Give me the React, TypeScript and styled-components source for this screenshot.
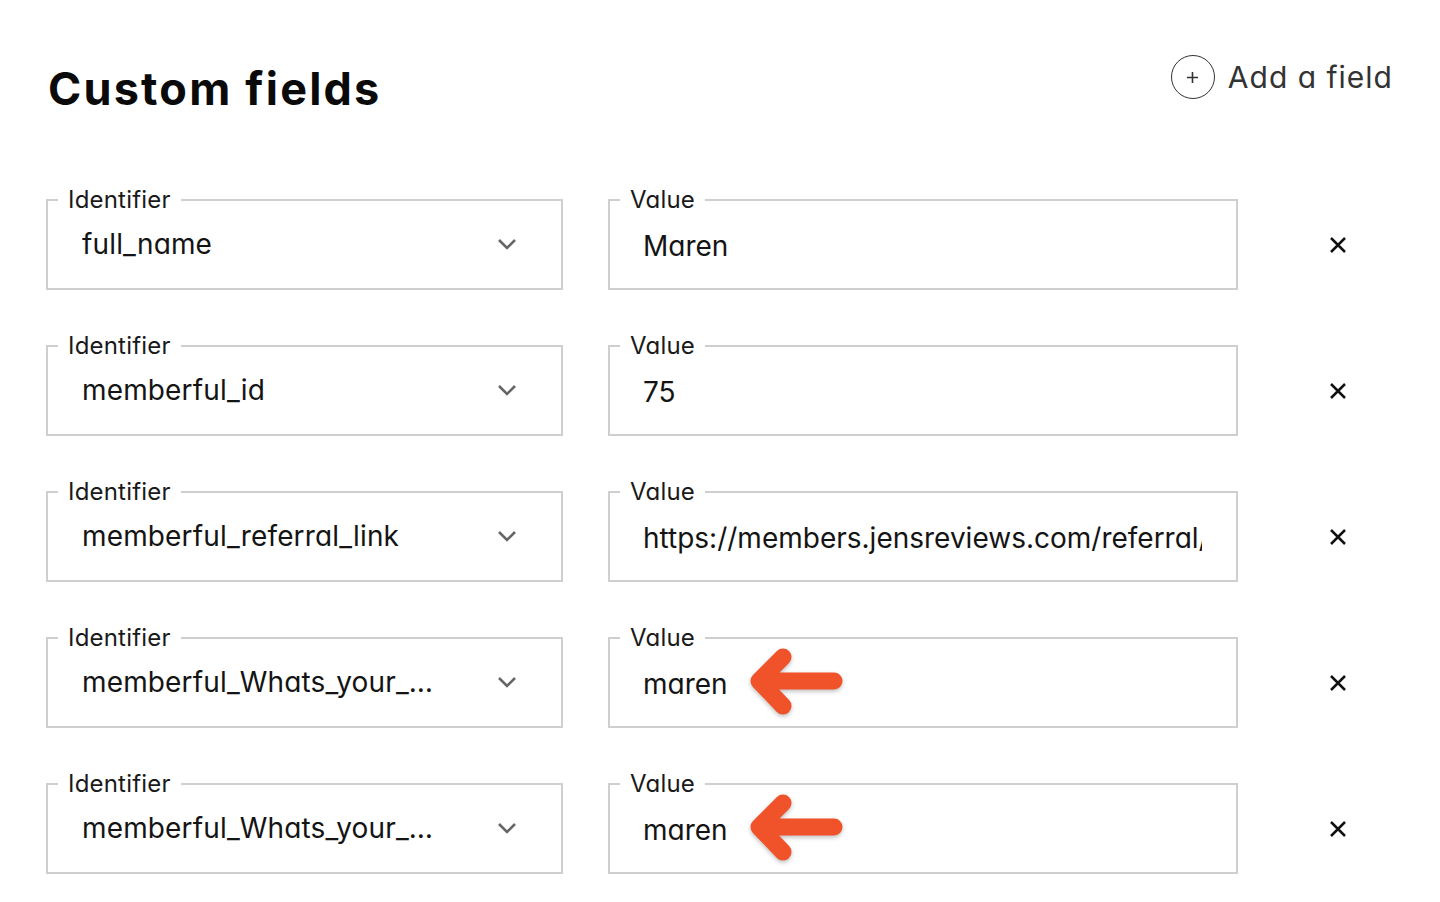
import React from "react";
import styled, { createGlobalStyle } from "styled-components";

const GlobalStyle = createGlobalStyle`
  html, body { margin: 0; padding: 0; background: #ffffff; }
  body {
    font-family: Inter, "Noto Sans", sans-serif;
    font-feature-settings: "cv11" 1;
    color: #111111;
  }
`;

const Page = styled.div`
  width: 1440px;
  height: 902px;
  box-sizing: border-box;
  padding: 0 0 0 46px;
  overflow: hidden;
`;

const Header = styled.div`
  display: flex;
  justify-content: space-between;
  align-items: flex-start;
  padding: 61px 47px 0 2px;
`;

const Title = styled.h1`
  margin: 0;
  font-size: 45px;
  line-height: 55px;
  font-weight: 700;
  letter-spacing: 2.2px;
  color: #0a0a0a;
`;

const AddButton = styled.button`
  display: flex;
  align-items: center;
  gap: 13px;
  margin-top: -6px;
  border: none;
  background: none;
  padding: 0;
  font-family: inherit;
  font-feature-settings: "cv11" 1;
  font-size: 30px;
  letter-spacing: 1px;
  color: #333333;
  cursor: pointer;
`;

const PlusCircle = styled.span`
  display: flex;
  align-items: center;
  justify-content: center;
  width: 44px;
  height: 44px;
  box-sizing: border-box;
  border: 1.6px solid #333333;
  border-radius: 50%;
`;

const Rows = styled.div`
  display: grid;
  grid-template-columns: 517px 630px 110px;
  column-gap: 45px;
  row-gap: 44px;
  margin-top: 72px;
`;

const Field = styled.fieldset`
  position: relative;
  margin: 0;
  padding: 0 34px 12px 34px;
  height: 102px;
  box-sizing: border-box;
  border: 2px solid #cfcfcf;
  min-width: 0;
`;

const Legend = styled.legend`
  margin-left: -24px;
  padding: 0 10px;
  font-size: 24px;
  line-height: 24px;
  color: #1a1a1a;
  letter-spacing: 0.2px;
`;

const FieldBody = styled.div<{ $value?: boolean }>`
  display: flex;
  align-items: center;
  justify-content: space-between;
  height: 100%;
  padding-top: ${(p) => (p.$value ? "4px" : "0")};
  margin-left: ${(p) => (p.$value ? "-1px" : "0")};
  box-sizing: border-box;
  font-size: 28px;
  letter-spacing: ${(p) => (p.$value ? "0" : "0.15px")};
  color: #141414;
  white-space: nowrap;
  overflow: hidden;
`;

const Chevron = styled.svg`
  flex: none;
  margin-right: 10px;
`;

const RemoveCell = styled.div`
  display: flex;
  align-items: center;
  justify-content: center;
  padding-top: 12px;
`;

const RemoveButton = styled.button`
  display: flex;
  border: none;
  background: none;
  padding: 0;
  cursor: pointer;
`;

const ArrowMark = styled.svg`
  position: absolute;
  left: 132px;
  top: -10px;
  filter: drop-shadow(0 2px 2px rgba(0, 0, 0, 0.25));
`;

type Row = { id: string; value: string; arrow?: boolean };

const rows: Row[] = [
  { id: "full_name", value: "Maren" },
  { id: "memberful_id", value: "75" },
  { id: "memberful_referral_link", value: "https://members.jensreviews.com/referral/" },
  { id: "memberful_Whats_your_…", value: "maren", arrow: true },
  { id: "memberful_Whats_your_…", value: "maren", arrow: true },
];

export default function App() {
  return (
    <Page>
      <GlobalStyle />
      <Header>
        <Title>Custom fields</Title>
        <AddButton>
          <PlusCircle>
            <svg width="13" height="13" viewBox="0 0 13 13">
              <path d="M6.5 1v11M1 6.5h11" stroke="#333" strokeWidth="1.6" />
            </svg>
          </PlusCircle>
          Add a field
        </AddButton>
      </Header>
      <Rows>
        {rows.map((r, i) => (
          <React.Fragment key={i}>
            <Field>
              <Legend>Identifier</Legend>
              <FieldBody>
                <span>{r.id}</span>
                <Chevron width="20" height="12" viewBox="0 0 20 12">
                  <path d="M2 2l8 8 8-8" fill="none" stroke="#666" strokeWidth="2.6" />
                </Chevron>
              </FieldBody>
            </Field>
            <Field>
              <Legend>Value</Legend>
              <FieldBody $value>
                <span>{r.value}</span>
              </FieldBody>
              {r.arrow && (
                <ArrowMark width="110" height="85" viewBox="0 0 110 85">
                  <path
                    d="M92 41H17M41 17L17 41L41 66"
                    fill="none"
                    stroke="#F0522A"
                    strokeWidth="17"
                    strokeLinecap="round"
                    strokeLinejoin="round"
                  />
                </ArrowMark>
              )}
            </Field>
            <RemoveCell>
              <RemoveButton aria-label="Remove">
                <svg width="18" height="18" viewBox="0 0 18 18">
                  <path d="M2 2l14 14M16 2L2 16" stroke="#111" strokeWidth="2.5" />
                </svg>
              </RemoveButton>
            </RemoveCell>
          </React.Fragment>
        ))}
      </Rows>
    </Page>
  );
}
